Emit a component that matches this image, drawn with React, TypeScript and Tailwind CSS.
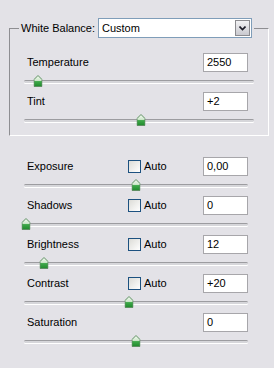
import React from "react";

const font = { fontFamily: '"Liberation Sans", Arial, sans-serif' };

function Thumb() {
  return (
    <svg width="9" height="12" viewBox="0 0 9 12" className="block">
      <defs>
        <linearGradient id="tg" x1="0" y1="0" x2="0" y2="1">
          <stop offset="0" stopColor="#f4fbf2" />
          <stop offset="0.45" stopColor="#cfe8cc" />
          <stop offset="0.55" stopColor="#3fa94a" />
          <stop offset="1" stopColor="#1f8a2c" />
        </linearGradient>
      </defs>
      <polygon
        points="4.5,0.5 8.5,4.5 8.5,11.5 0.5,11.5 0.5,4.5"
        fill="url(#tg)"
        stroke="#5f8f63"
        strokeWidth="1"
      />
    </svg>
  );
}

function Slider({ pct }: { pct: number }) {
  return (
    <div className="relative h-[20px] w-full">
      <div className="absolute left-0 right-0 top-[8px] h-[3px] rounded-full border-t border-[#9c9ca0] bg-[#d6d6da] shadow-[0_1px_0_#ffffff]" />
      <div
        className="absolute top-[3px] -translate-x-1/2"
        style={{ left: `${pct}%` }}
      >
        <Thumb />
      </div>
    </div>
  );
}

function Checkbox() {
  return (
    <div className="h-[13px] w-[13px] border border-[#1c5180] bg-gradient-to-br from-[#dcdcd7] to-white" />
  );
}

function Row({
  label,
  value,
  pct,
  auto,
}: {
  label: string;
  value: string;
  pct: number;
  auto?: boolean;
}) {
  return (
    <div className="flex flex-col">
      <div className="flex h-[19px] items-center">
        <div className="w-[104px] pl-[3px] text-[11px] text-black">{label}</div>
        <div className="flex w-[75px] items-center gap-[3px]">
          {auto && (
            <>
              <Checkbox />
              <span className="text-[11px] text-black">Auto</span>
            </>
          )}
        </div>
        <div className="flex h-[19px] w-[45px] items-center border border-[#a7a6aa] bg-white pl-[3px] text-[11px] text-black">
          {value}
        </div>
      </div>
      <Slider pct={pct} />
    </div>
  );
}

export default function App() {
  return (
    <div
      className="h-[368px] w-[274px] overflow-hidden bg-[#e3e2e7] pt-[18px]"
      style={font}
    >
      <fieldset className="mx-[9px] w-[255px] border border-b-white border-l-[#8e8e92] border-r-white border-t-[#8e8e92] px-[14px] pb-[4px] pt-[15px]">
        <legend className="-ml-[5px] px-[2px]">
          <div className="flex h-[20px] items-center">
            <span className="w-[77px] text-[11px] text-black">White Balance:</span>
            <div className="flex h-[20px] w-[154px] items-center border border-[#7f9db9] bg-white">
              <span className="flex-1 pl-[3px] text-[11px] text-black">Custom</span>
              <div className="mr-[1px] flex h-[16px] w-[15px] items-center justify-center border border-[#8b8b8f] bg-gradient-to-b from-[#f2f2f4] to-[#c9c9cf]">
                <svg width="7" height="5" viewBox="0 0 7 5">
                  <path d="M0.5 0.5 L3.5 3.5 L6.5 0.5" fill="none" stroke="#1d1d28" strokeWidth="1.6" />
                </svg>
              </div>
            </div>
          </div>
        </legend>
        <div className="flex flex-col">
          <Row label="Temperature" value="2550" pct={6} />
          <Row label="Tint" value="+2" pct={51} />
        </div>
      </fieldset>
      <div className="ml-[24px] mt-[21px] flex w-[224px] flex-col">
        <Row label="Exposure" value="0,00" pct={50} auto />
        <Row label="Shadows" value="0" pct={1} auto />
        <Row label="Brightness" value="12" pct={9} auto />
        <Row label="Contrast" value="+20" pct={47} auto />
        <Row label="Saturation" value="0" pct={50} />
      </div>
    </div>
  );
}
